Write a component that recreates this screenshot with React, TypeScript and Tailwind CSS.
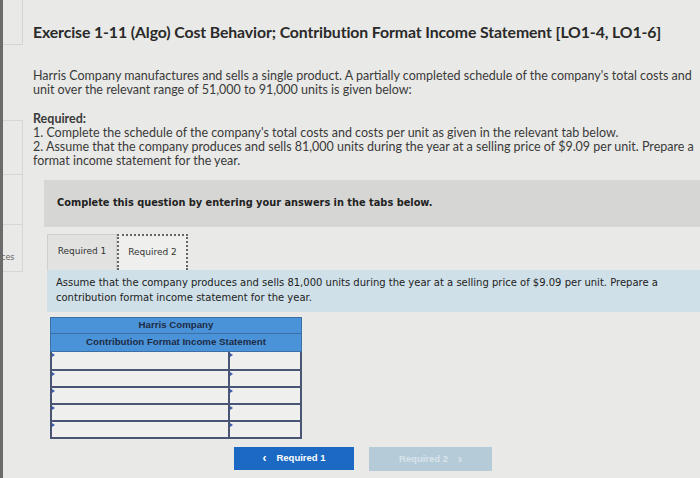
import React from 'react';

const lato = { fontFamily: 'Lato, "Open Sans", sans-serif' };
const verdana = { fontFamily: '"DejaVu Sans", Verdana, sans-serif' };
const arial = { fontFamily: '"Liberation Sans", Arial, sans-serif' };

const App: React.FC = () => {
  const rows = [0, 1, 2, 3, 4];

  return (
    <div className="w-[700px] h-[478px] overflow-hidden bg-[#e9e9e7] flex relative">
      {/* left bezel + side nav */}
      <div className="w-[3px] bg-[#6b6b6b] shrink-0" />
      <div className="w-[20px] shrink-0 flex flex-col">
        <div className="h-[45px] border-b border-r border-[#d4d4d2]" />
        <div className="h-[75px]" />
        <div className="h-[55px] border-y border-r border-[#d6d6d4]" />
        <div className="h-[50px] border-b border-r border-[#d6d6d4]" />
        <div className="h-[47px] border-b border-r border-[#d6d6d4] flex items-end pb-[7px]">
          <span className="text-[8px] text-[#666] -ml-[2px]" style={verdana}>ces</span>
        </div>
      </div>

      <div className="flex-1 min-w-0 pl-[10px]">
        <h1 className="mt-[20px] text-[15.8px] font-bold text-[#2a2a2a] whitespace-nowrap tracking-[-0.1px]" style={lato}>
          Exercise 1-11 (Algo) Cost Behavior; Contribution Format Income Statement [LO1-4, LO1-6]
        </h1>

        <p className="mt-[25px] text-[12.5px] leading-[14px] text-[#3a3a3a] whitespace-nowrap" style={lato}>
          Harris Company manufactures and sells a single product. A partially completed schedule of the company's total costs and
          <br />
          unit over the relevant range of 51,000 to 91,000 units is given below:
        </p>

        <div className="mt-[15px] text-[12.5px] leading-[14px] text-[#3a3a3a] whitespace-nowrap" style={lato}>
          <div className="font-bold">Required:</div>
          <div>1. Complete the schedule of the company's total costs and costs per unit as given in the relevant tab below.</div>
          <div>2. Assume that the company produces and sells 81,000 units during the year at a selling price of $9.09 per unit. Prepare a</div>
          <div>format income statement for the year.</div>
        </div>

        <div className="ml-[11px] mt-[12px] h-[47px] bg-[#d6d6d4] flex items-center pl-[13px]">
          <span className="text-[9.8px] font-bold text-[#222]" style={verdana}>
            Complete this question by entering your answers in the tabs below.
          </span>
        </div>

        <div className="ml-[14px] mt-[7px]" style={verdana}>
          <div className="flex">
            <div className="w-[70px] h-[36px] bg-[#e2e2e0] border border-[#cfcfcd] border-b-0 flex items-center justify-center text-[9px] text-[#333]">
              Required 1
            </div>
            <div className="w-[71px] h-[36px] bg-[#efefed] border-2 border-dotted border-[#666] border-b-0 flex items-center justify-center text-[9px] text-[#333]">
              Required 2
            </div>
          </div>

          <div className="h-[42px] bg-[#cfe0e8] pl-[9px] pt-[5px] text-[10px] leading-[15px] text-[#222] whitespace-nowrap">
            Assume that the company produces and sells 81,000 units during the year at a selling price of $9.09 per unit. Prepare a
            <br />
            contribution format income statement for the year.
          </div>

          <div className="mt-[5px] ml-[3px] w-[252px]" style={arial}>
            <div className="bg-[#4b93d8] border border-[#3c6fa8] h-[17px] flex items-center justify-center text-[9.7px] font-bold text-[#1d2b45]">
              Harris Company
            </div>
            <div className="bg-[#4b93d8] border border-t-0 border-[#3c6fa8] h-[18px] flex items-center justify-center text-[9.7px] font-bold text-[#1d2b45]">
              Contribution Format Income Statement
            </div>
            <div className="border-2 border-t-0 border-[#4a5575]">
              {rows.map((r) => (
                <div key={r} className={`flex h-[17px] ${r > 0 ? 'border-t-2 border-[#4a5575]' : ''}`}>
                  <div className="relative flex-1 bg-[#efefed] border-r-2 border-[#4a5575]">
                    <span className="absolute left-0 top-[1px] w-0 h-0 border-y-[2.5px] border-y-transparent border-l-[3px] border-l-[#3a5fb0]" />
                  </div>
                  <div className="relative w-[70px] bg-[#efefed]">
                    <span className="absolute left-0 top-[1px] w-0 h-0 border-y-[2.5px] border-y-transparent border-l-[3px] border-l-[#3a5fb0]" />
                  </div>
                </div>
              ))}
            </div>
          </div>

          <div className="flex mt-[8px] ml-[187px] gap-[15px]" style={arial}>
            <div className="w-[120px] h-[23px] bg-[#1b69c2] flex items-center justify-center gap-[10px] text-white text-[9.5px] font-bold">
              <span className="text-[12px] leading-none">‹</span>
              <span>Required 1</span>
            </div>
            <div className="w-[123px] h-[24px] bg-[#b6cbd8] flex items-center justify-center gap-[10px] text-[#d8e4ec] text-[9.5px] font-bold">
              <span>Required 2</span>
              <span className="text-[12px] leading-none">›</span>
            </div>
          </div>
        </div>
      </div>
    </div>
  );
};

export default App;
